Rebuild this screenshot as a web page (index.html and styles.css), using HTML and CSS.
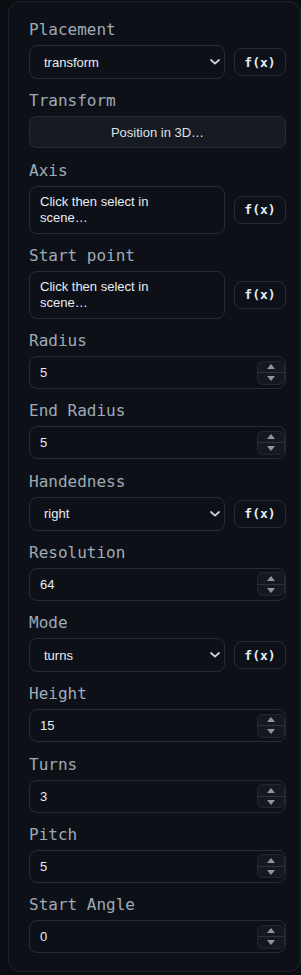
FILE: index.html
```html
<!DOCTYPE html>
<html lang="en">
<head>
<meta charset="utf-8">
<title>Helix</title>
<link rel="stylesheet" href="styles.css">
</head>
<body>
<div class="panel">
  <div class="field">
    <div class="label">Placement</div>
    <div class="row">
      <div class="select"><select><option>transform</option></select><svg class="chev" width="10" height="6" viewBox="0 0 10 6"><path d="M1 1l4 3.6L9 1" fill="none" stroke="#c9d1d9" stroke-width="1.8" stroke-linecap="round" stroke-linejoin="round"/></svg></div>
      <button class="fx">f(x)</button>
    </div>
  </div>
  <div class="field">
    <div class="label">Transform</div>
    <button class="wide">Position in 3D…</button>
  </div>
  <div class="field">
    <div class="label">Axis</div>
    <div class="row">
      <div class="pick"><span class="pick-text">Click then select in scene…</span></div>
      <button class="fx">f(x)</button>
    </div>
  </div>
  <div class="field">
    <div class="label">Start point</div>
    <div class="row">
      <div class="pick"><span class="pick-text">Click then select in scene…</span></div>
      <button class="fx">f(x)</button>
    </div>
  </div>
  <div class="field">
    <div class="label">Radius</div>
    <div class="num"><span class="num-val">5</span><span class="spin"><span class="up"></span><span class="sep"></span><span class="down"></span></span></div>
  </div>
  <div class="field">
    <div class="label">End Radius</div>
    <div class="num"><span class="num-val">5</span><span class="spin"><span class="up"></span><span class="sep"></span><span class="down"></span></span></div>
  </div>
  <div class="field">
    <div class="label">Handedness</div>
    <div class="row">
      <div class="select"><select><option>right</option></select><svg class="chev" width="10" height="6" viewBox="0 0 10 6"><path d="M1 1l4 3.6L9 1" fill="none" stroke="#c9d1d9" stroke-width="1.8" stroke-linecap="round" stroke-linejoin="round"/></svg></div>
      <button class="fx">f(x)</button>
    </div>
  </div>
  <div class="field">
    <div class="label">Resolution</div>
    <div class="num"><span class="num-val">64</span><span class="spin"><span class="up"></span><span class="sep"></span><span class="down"></span></span></div>
  </div>
  <div class="field">
    <div class="label">Mode</div>
    <div class="row">
      <div class="select"><select><option>turns</option></select><svg class="chev" width="10" height="6" viewBox="0 0 10 6"><path d="M1 1l4 3.6L9 1" fill="none" stroke="#c9d1d9" stroke-width="1.8" stroke-linecap="round" stroke-linejoin="round"/></svg></div>
      <button class="fx">f(x)</button>
    </div>
  </div>
  <div class="field">
    <div class="label">Height</div>
    <div class="num"><span class="num-val">15</span><span class="spin"><span class="up"></span><span class="sep"></span><span class="down"></span></span></div>
  </div>
  <div class="field">
    <div class="label">Turns</div>
    <div class="num"><span class="num-val">3</span><span class="spin"><span class="up"></span><span class="sep"></span><span class="down"></span></span></div>
  </div>
  <div class="field">
    <div class="label">Pitch</div>
    <div class="num"><span class="num-val">5</span><span class="spin"><span class="up"></span><span class="sep"></span><span class="down"></span></span></div>
  </div>
  <div class="field">
    <div class="label">Start Angle</div>
    <div class="num"><span class="num-val">0</span><span class="spin"><span class="up"></span><span class="sep"></span><span class="down"></span></span></div>
  </div>
</div>
</body>
</html>
```
FILE: styles.css
```css
html, body {
  margin: 0;
  padding: 0;
  background: #0a0d12;
}
body {
  padding: 1px 0 0 8px;
  color-scheme: dark;
}
.panel {
  box-sizing: border-box;
  width: 293px;
  background: #0d1117;
  border: 1px solid #1f242c;
  border-radius: 12px;
  padding: 18px 14px 18px 20px;
  display: flex;
  flex-direction: column;
  gap: 12.25px;
}
.field {
  display: flex;
  flex-direction: column;
}
.label {
  font-family: "DejaVu Sans Mono", monospace;
  font-size: 16px;
  line-height: 20px;
  color: #9eaab7;
  margin-bottom: 5px;
}
.row {
  display: flex;
  align-items: center;
  gap: 9px;
}
.select {
  flex: 1;
  box-sizing: border-box;
  height: 34px;
  border: 1px solid #272c34;
  border-radius: 8px;
  display: flex;
  align-items: center;
  padding-right: 4px;
}
.select select {
  flex: 1;
  appearance: none;
  -webkit-appearance: none;
  background: transparent;
  border: none;
  outline: none;
  color: #e6edf3;
  font-family: "Liberation Sans", Arial, sans-serif;
  font-size: 13px;
  padding: 0 0 0 14px;
  height: 32px;
}
.chev {
  display: block;
}
.fx {
  box-sizing: border-box;
  width: 52px;
  height: 28px;
  flex: none;
  background: #0d1117;
  border: 1px solid #272c34;
  border-radius: 8px;
  color: #e6edf3;
  font-family: "DejaVu Sans Mono", monospace;
  font-weight: bold;
  font-size: 13px;
  padding: 0;
}
.wide {
  box-sizing: border-box;
  height: 32px;
  width: 100%;
  background: #161b22;
  border: 1px solid #262c34;
  border-radius: 8px;
  color: #dce2e8;
  font-family: "Liberation Sans", Arial, sans-serif;
  font-size: 13px;
  padding: 0;
}
.pick {
  flex: 1;
  box-sizing: border-box;
  height: 48px;
  border: 1px solid #272c34;
  border-radius: 8px;
  padding: 7px 10px;
  display: flex;
  align-items: center;
}
.pick-text {
  max-width: 150px;
  font-family: "Liberation Sans", Arial, sans-serif;
  font-size: 13px;
  line-height: 16px;
  color: #e6edf3;
}
.num {
  box-sizing: border-box;
  height: 33px;
  border: 1px solid #272c34;
  border-radius: 8px;
  display: flex;
  align-items: center;
  padding-left: 10px;
}
.num-val {
  flex: 1;
  font-family: "Liberation Sans", Arial, sans-serif;
  font-size: 13px;
  color: #e6edf3;
}
.spin {
  box-sizing: border-box;
  width: 28px;
  height: 24px;
  background: #141920;
  border: 1px solid #22272f;
  border-radius: 6px;
  display: flex;
  flex-direction: column;
  align-items: center;
  justify-content: center;
}
.up, .down {
  width: 0;
  height: 0;
  border-left: 4.5px solid transparent;
  border-right: 4.5px solid transparent;
}
.up {
  border-bottom: 5px solid #8d96a1;
  margin-bottom: 3px;
}
.down {
  border-top: 5px solid #8d96a1;
  margin-top: 3px;
}
.sep {
  align-self: stretch;
  height: 1px;
  background: #2c323a;
}
```
